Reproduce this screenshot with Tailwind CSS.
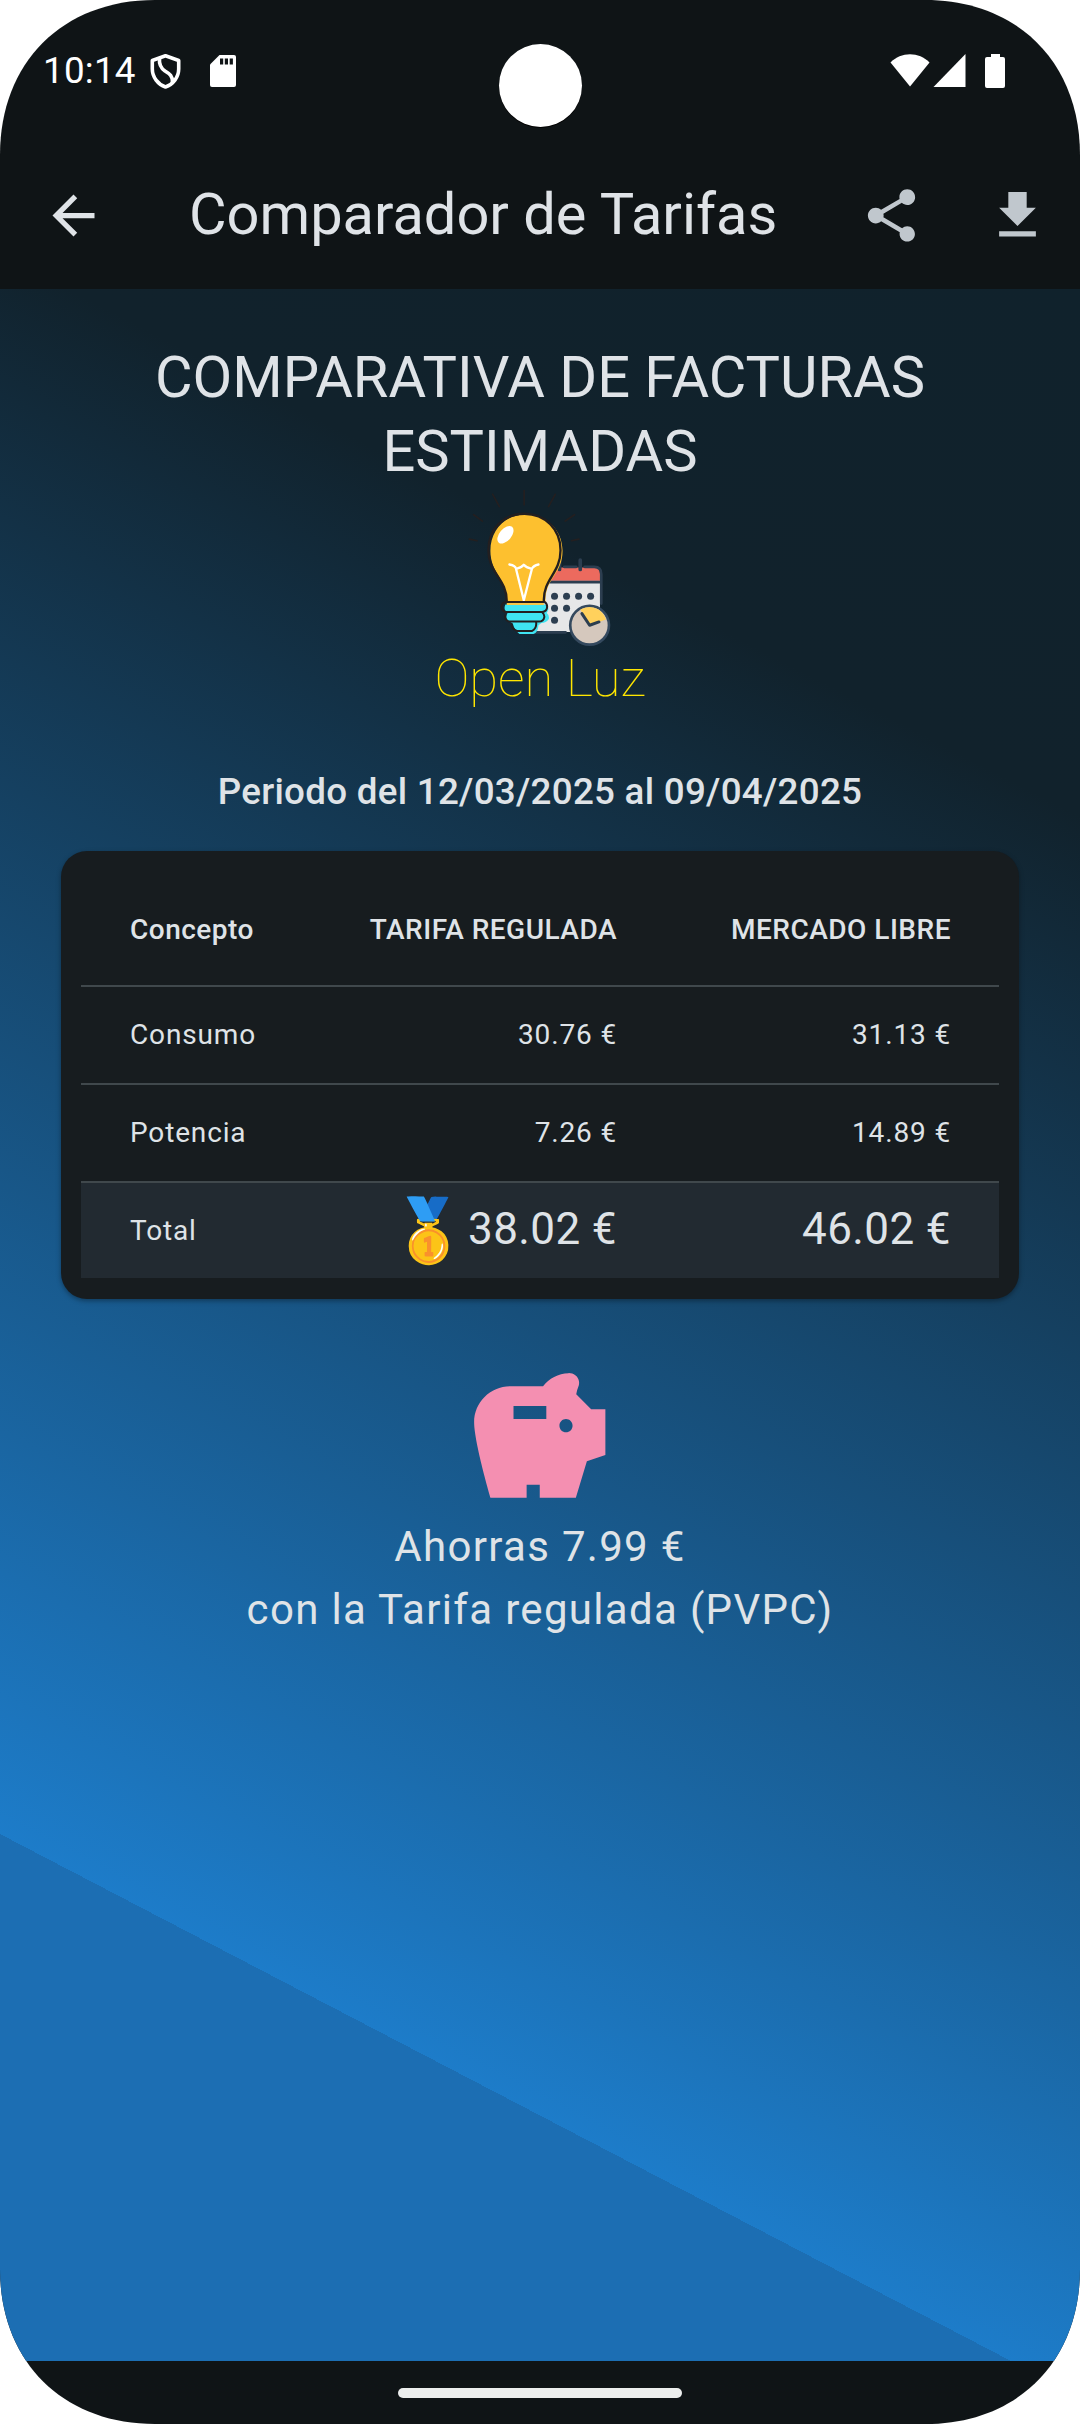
<!DOCTYPE html>
<html lang="es">
<head>
<meta charset="utf-8">
<title>Comparador de Tarifas</title>
<script src="https://cdn.jsdelivr.net/npm/@tailwindcss/browser@4"></script>
</head>
<body class="bg-white font-[Roboto,sans-serif]">
<div class="relative flex h-[2424px] w-[1080px] flex-col overflow-hidden bg-[#0f1416] text-[#dfe3e7] [clip-path:path('M0_155C0_62.5_62.5_0_155_0H925C1017.5_0_1080_62.5_1080_155V2269C1080_2361.5_1017.5_2424_925_2424H155C62.5_2424_0_2361.5_0_2269Z')]">

  <!-- status bar -->
  <div class="flex h-[142px] shrink-0 items-start justify-between pr-[75px] pl-[43px] text-white">
    <div class="flex items-start">
      <span class="mt-[49px] w-[107px] text-[36.75px] leading-[43px] tracking-[0.25px]">10:14</span>
      <svg class="mt-[54px] h-[35px] w-[31px]" viewBox="0 0 31 35" fill="none" stroke="#fff" stroke-width="3.6" stroke-linejoin="round">
        <path d="M15.5 1.8L2.3 6.5V15C2.3 23 8 30.500 15.500 33C23 30.500 28.700 23 28.700 15V6.500Z"/>
        <path d="M9.500 4.500C9 10 10.500 14 15 17C20 20 22.500 22 22.500 28"/>
      </svg>
      <svg class="mt-[55px] ml-[29px] h-8 w-[26px]" viewBox="0 0 26 32">
        <path fill="#fff" d="M9.500 0H24Q26 0 26 2V30Q26 32 24 32H2Q0 32 0 30V9.500Z"/>
        <path fill="#0f1416" d="M10 3.500h3.200v6H10zM14.800 3.500H18v6h-3.200zM19.700 3.500h3.200v6h-3.200z"/>
      </svg>
    </div>
    <div class="mt-[54px] flex">
      <svg class="h-[34px] w-[40px]" viewBox="0 0 40 34" fill="#fff"><path d="M0.500 8.500C11-2.500 29-2.500 39.500 8.500L20 32.500Z"/></svg>
      <svg class="ml-[3px] h-[34px] w-[33px]" viewBox="0 0 33 34" fill="#fff"><path d="M32.500 0V33H0.500Z"/></svg>
      <svg class="ml-[19px] h-[34px] w-5" viewBox="0 0 20 34" fill="#fff"><path d="M6 0h9v3h3q2 0 2 2v27q0 2-2 2H2q-2 0-2-2V5q0-2 2-2h4z"/></svg>
    </div>
  </div>
  <!-- camera cut-out -->
  <div class="absolute top-[43.5px] left-[498.5px] size-[83px] rounded-full bg-white shadow-[0_1px_0_0_#000]"></div>

  <!-- app bar -->
  <header class="flex h-[147px] shrink-0 items-center pr-[31px] pl-[42px]">
    <svg class="size-[63px]" viewBox="0 0 24 24" fill="#dfe3e7"><path d="M20 11H7.830l5.590-5.590L12 4l-8 8 8 8 1.410-1.410L7.830 13H20v-2z"/></svg>
    <h1 class="mb-[3px] ml-[84px] flex-1 text-[57.75px] leading-[68px] whitespace-nowrap">Comparador de Tarifas</h1>
    <svg class="size-[63px]" viewBox="0 0 24 24" fill="#c0c7cd"><path d="M18 16.080c-.76 0-1.440.3-1.960.77L8.910 12.700c.05-.23.09-.46.09-.7s-.04-.47-.09-.7l7.050-4.110c.54.5 1.250.81 2.040.81 1.660 0 3-1.340 3-3s-1.340-3-3-3-3 1.340-3 3c0 .24.04.47.09.7L8.040 9.810C7.500 9.310 6.790 9 6 9c-1.660 0-3 1.340-3 3s1.340 3 3 3c.79 0 1.500-.31 2.040-.81l7.120 4.160c-.05.21-.08.43-.08.65 0 1.610 1.310 2.920 2.920 2.920s2.920-1.310 2.920-2.920-1.310-2.920-2.920-2.920z"/></svg>
    <svg class="ml-[63px] size-[63px]" viewBox="0 0 24 24" fill="#c0c7cd"><path d="M15.500 9V3h-7v6H5l7 7 7-7zM5 18v2h14v-2z"/></svg>
  </header>

  <!-- content -->
  <main class="flex h-[2072px] shrink-0 flex-col items-center bg-[linear-gradient(207.53deg,#10222c_0%,#11222c_20%,#1d7cc9_80%,#1c6eb3_80%,#1c6eb3_100%)] pt-[52px]">
    <h2 class="text-center text-[57.75px] leading-[73.5px]">COMPARATIVA DE FACTURAS<br>ESTIMADAS</h2>

    <svg class="mt-[2px] ml-[-1px] h-[157px] w-[147px]" viewBox="140 0 440 470" fill="none" stroke-linecap="round" stroke-linejoin="round">
      <g stroke="#231f20" stroke-width="5">
        <path d="M314 0V44M220 13L240 50M407 13L387 50M163 74L189 93M465 74L437 93M150 147L173 152M478 147L456 152"/>
      </g>
      <!-- calendar -->
      <path fill="#e6e7e8" d="M340 270H541V425H340Z"/>
      <path fill="#ec6a5e" d="M380 232H524Q541 232 541 250V272H380Z"/>
      <path stroke="#2c3e50" stroke-width="8" d="M400 230H410M434 230H470M495 230H524Q545 230 545 252V340M385 276H541M340 426H438"/>
      <path stroke="#2c3e50" stroke-width="11" d="M420 210V238M482 210V238"/>
      <g fill="#2c3e50"><circle cx="405" cy="318" r="10.500"/><circle cx="441" cy="318" r="10.500"/><circle cx="477" cy="318" r="10.500"/><circle cx="513" cy="318" r="10.500"/><circle cx="405" cy="354" r="10.500"/><circle cx="441" cy="354" r="10.500"/><circle cx="405" cy="390" r="10.500"/></g>
      <!-- clock -->
      <circle cx="510" cy="405" r="58" fill="#d5c8bd" stroke="#34495e" stroke-width="8"/>
      <path fill="#ffd15c" d="M510 405L482 358Q510 342 537 358Q552 368 559 388Z"/>
      <path stroke="#2c3e50" stroke-width="9" d="M487 370L510 405L538 395"/>
      <!-- bulb -->
      <path fill="#fdc02f" d="M318 73C380 73 429 118 429 182C429 255 376 262 378 336H262C262 265 213 250 213 182C213 120 258 73 318 73Z"/>
      <path stroke="#231f20" stroke-width="7" d="M262 333C262 265 207 250 207 180C207 118 252 71 315 71C377 71 423 118 423 180C423 250 371 265 373 333"/>
      <ellipse cx="258" cy="134" rx="18" ry="31" transform="rotate(40 258 134)" fill="#fff"/>
      <path stroke="#fff" stroke-width="7" d="M270 223Q288 226 290 236Q304 234 313 224Q322 234 337 236Q342 226 357 223M290 237L313 330L337 237"/>
      <!-- socket -->
      <path fill="#3fe4f2" d="M258 343H376Q389 350 386 360L382 368Q390 375 388 386Q380 398 366 398L357 405Q355 428 342 431H300Q285 420 280 400L262 388Q258 375 266 366Q250 360 258 343Z"/>
      <path fill="#f5c648" d="M262 338H373V344H262Z"/>
      <g stroke="#231f20" stroke-width="6">
        <path d="M262 335H375Q383 340 383 350Q382 364 368 365H256Q246 360 246 349Q247 338 258 335"/>
        <path d="M369 367Q376 374 374 382Q372 393 358 394H268Q256 388 257 376M350 396Q352 414 338 422H292Q277 415 276 402"/>
      </g>
    </svg>
    <div class="text-[52.5px] leading-[62px] font-thin text-[#ffe600]">Open Luz</div>

    <p class="mt-[61px] text-[36.75px] leading-[44px] font-medium tracking-[0.27px]">Periodo del 12/03/2025 al 09/04/2025</p>

    <section class="mt-[37px] h-[448px] w-[958px] rounded-[26px] bg-[#171c1f] px-5 pt-5 shadow-[0_2px_5px_rgba(0,0,0,0.35)]">
      <div class="grid h-[116px] grid-cols-[210px_277px_1fr] items-center border-b-2 border-[#40484c] pt-[3px] pr-[48px] pl-[49px] text-[28px] font-medium tracking-[0.5px]">
        <span>Concepto</span><span class="text-right">TARIFA REGULADA</span><span class="text-right">MERCADO LIBRE</span>
      </div>
      <div class="grid h-[98px] grid-cols-[210px_277px_1fr] items-center border-b-2 border-[#40484c] pr-[48px] pl-[49px] text-[28px] tracking-[0.85px]">
        <span>Consumo</span><span class="text-right">30.76 €</span><span class="text-right">31.13 €</span>
      </div>
      <div class="grid h-[98px] grid-cols-[210px_277px_1fr] items-center border-b-2 border-[#40484c] pr-[48px] pl-[49px] text-[28px] tracking-[0.85px]">
        <span>Potencia</span><span class="text-right">7.26 €</span><span class="text-right">14.89 €</span>
      </div>
      <div class="grid h-[95px] grid-cols-[210px_277px_1fr] items-center bg-[#222a31] pr-[48px] pl-[49px] text-[28px] tracking-[0.85px]">
        <span>Total</span>
        <span class="flex items-center justify-end text-[44px] leading-[50px] tracking-[0.4px]"><span class="mr-[1px] text-[62px] leading-[70px] tracking-normal">🥇</span><span class="mb-[4px]">38.02 €</span></span>
        <span class="mb-[4px] text-right text-[44px] leading-[50px] tracking-[0.4px]">46.02 €</span>
      </div>
    </section>

    <svg class="mt-[60.5px] size-[157.5px]" viewBox="0 0 24 24" fill="#f48fb1"><path d="M19.830 7.500l-2.270-2.270c.07-.42.18-.81.32-1.150.11-.26.15-.56.09-.87C17.840 2.490 17.140 1.990 16.400 2c-1.590.03-3 .81-3.900 2h-5C4.460 4 2 6.460 2 9.500 2 12.540 4.500 21 4.500 21H10v-2h2v2h5.500l1.680-5.590L22 14.470V7.500h-2.170zM13 9H8V7h5v2zm3 2c-.55 0-1-.45-1-1s.45-1 1-1 1 .45 1 1-.45 1-1 1z"/></svg>
    <p class="mt-[-2px] text-center text-[42px] leading-[63px] tracking-[1.32px]">Ahorras 7.99 €<br>con la Tarifa regulada (PVPC)</p>
  </main>

  <!-- gesture bar -->
  <div class="flex h-[63px] items-start justify-center pt-[27px]">
    <div class="h-[10px] w-[284px] rounded-full bg-[#eceeed]"></div>
  </div>
</div>
</body>
</html>
